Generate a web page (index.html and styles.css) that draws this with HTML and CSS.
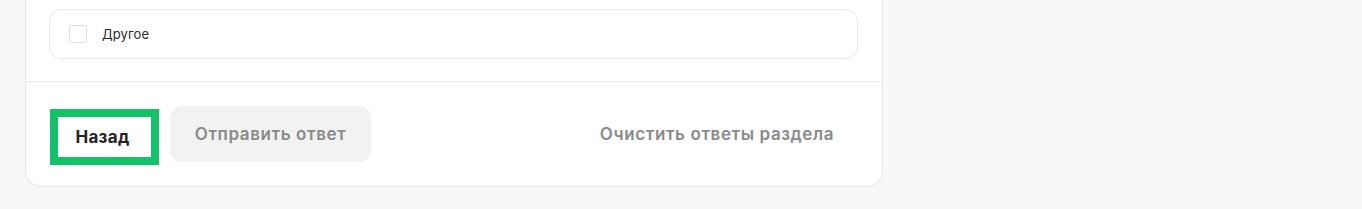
FILE: index.html
```html
<!DOCTYPE html>
<html lang="ru">
<head>
    <meta charset="UTF-8">
    <meta name="viewport" content="width=device-width, initial-scale=1.0">
    <title>Опрос</title>
    <link rel="stylesheet" href="styles.css">
</head>
<body>

<div class="card">
    <div class="options">
        <label class="option">
            <span class="checkbox"></span>
            <span class="option-text">Другое</span>
        </label>
    </div>
    <div class="footer">
        <div class="footer-left">
            <button class="btn btn-back">Назад</button>
            <button class="btn btn-send" disabled>Отправить ответ</button>
        </div>
        <button class="btn btn-clear">Очистить ответы раздела</button>
    </div>
</div>

</body>
</html>
```

FILE: styles.css
```css
body {
    margin: 0;
    background-color: #f8f8f8;
    font-family: Inter, "Noto Sans", sans-serif;
    color: #222;
}

.card {
    width: 856px;
    margin-left: 25px;
    background-color: #fff;
    border: 1px solid #e6e6ea;
    border-top: none;
    border-radius: 0 0 16px 16px;
}

.options {
    padding: 9px 24px 22px 23px;
    border-bottom: 1px solid #e8e8e8;
}

.option {
    display: flex;
    align-items: center;
    height: 48px;
    padding-left: 19px;
    border: 1px solid #e6e6ea;
    border-radius: 12px;
}

.checkbox {
    width: 16px;
    height: 16px;
    border: 1px solid #dfe0e4;
    border-radius: 2px;
    margin-right: 15px;
}

.option-text {
    font-size: 13px;
    letter-spacing: 0.1px;
    color: #2a2a2a;
}

.footer {
    display: flex;
    align-items: flex-start;
    justify-content: space-between;
    padding: 24px;
}

.footer-left {
    display: flex;
    align-items: flex-start;
    gap: 11px;
}

.btn {
    font-family: inherit;
    font-size: 17px;
    letter-spacing: 0.6px;
    font-weight: 600;
    border: none;
    background: none;
    height: 56px;
    cursor: pointer;
}

.btn-back {
    width: 109px;
    margin: 3px 0 -3px;
    background-color: #fff;
    border: 8px solid #13c16a;
    color: #222;
    font-weight: 700;
    letter-spacing: 0.3px;
    padding: 0 4px 0 0;
}

.btn-send {
    width: 201px;
    background-color: #f2f2f2;
    border-radius: 12px;
    color: #8a8a8a;
}

.btn-clear {
    color: #8a8a8a;
    padding: 0 24px;
}
```
